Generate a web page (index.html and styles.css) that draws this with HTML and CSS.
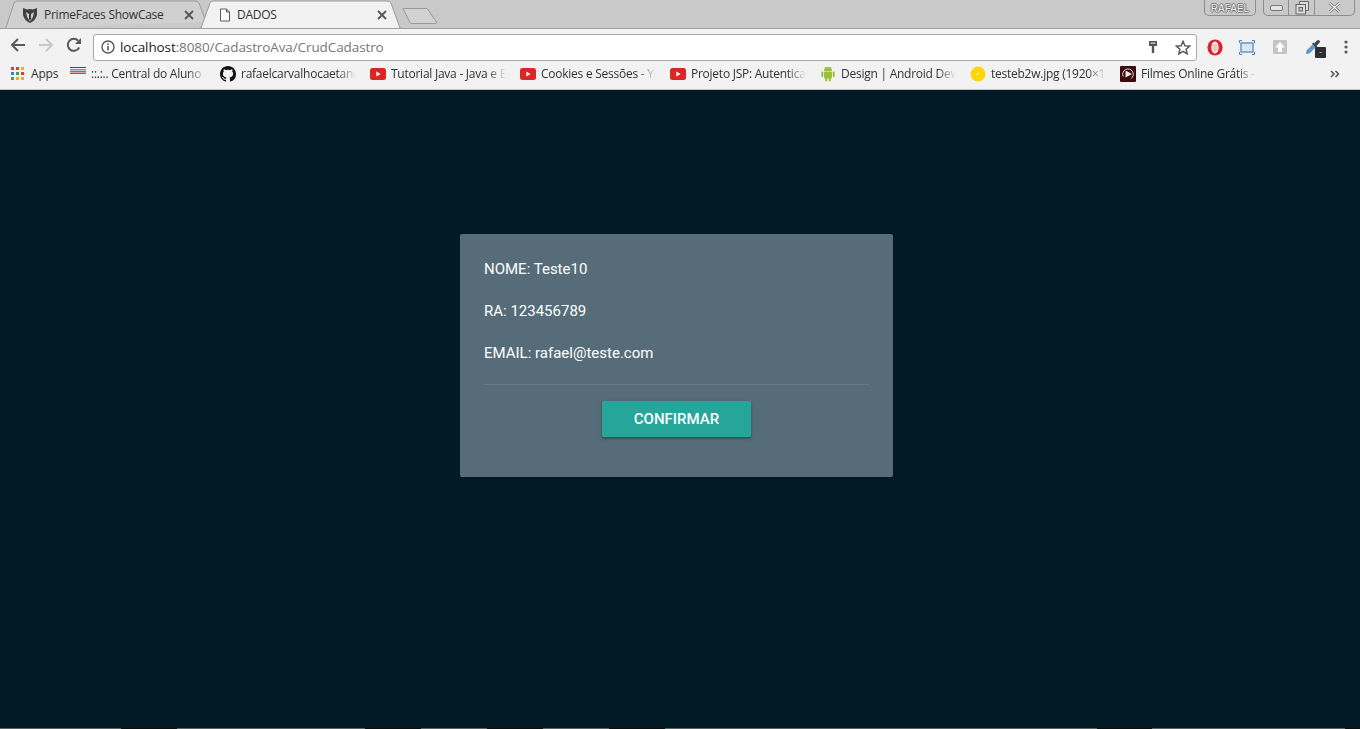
FILE: index.html
```html
<!DOCTYPE html>
<html lang="pt">
<head>
<meta charset="UTF-8">
<meta name="viewport" content="width=device-width, initial-scale=1">
<title>DADOS</title>
<link rel="stylesheet" href="styles.css">
</head>
<body>

<!-- Browser frame -->
<div class="tabstrip">
  <div class="tab tab-back">
    <svg class="tab-shape" width="201" height="29" viewBox="0 0 201 29"><path d="M0.5 29 L9 3 Q10 1 12 1 L190 1 Q193 1 194 3 L201 22" fill="#d0d0d0" stroke="#9b9b9b"/></svg>
    <svg class="tab-icon" width="16" height="18" viewBox="0 0 16 18">
      <path d="M1 2 L5 3.5 Q8 2.5 11 3.5 L15 2 L15 9 Q14 14 8 17 Q2 14 1 9 Z" fill="#3c4043"/>
      <path d="M4 6 L7 8 L7 12 L8 13.5 L9 12 L9 8 L12 6 L11 11 L8 15.5 L5 11 Z" fill="#c9cccc"/>
      <path d="M6.8 12 H9.2 L8 14.5 Z" fill="#222"/>
    </svg>
    <span class="tab-title">PrimeFaces ShowCase</span>
    <svg class="tab-close" width="10" height="10" viewBox="0 0 10 10"><path d="M1 1 L9 9 M9 1 L1 9" stroke="#555" stroke-width="1.8"/></svg>
  </div>
  <div class="tab tab-active">
    <svg class="tab-shape" width="204" height="29" viewBox="0 0 204 29"><path d="M0 29 L3 28 L12 3 Q13 1 15 1 L189 1 Q192 1 193 3 L202 28 L204 29 Z" fill="#f2f2f2"/><path d="M1 28 L3 28 L12 3 Q13 1 15 1 L189 1 Q192 1 193 3 L202 28 L204 28" fill="none" stroke="#9b9b9b"/></svg>
    <svg class="tab-icon" width="12" height="14" viewBox="0 0 12 14"><path d="M1.5 1 H7.5 L10.5 4 V13 H1.5 Z M7.5 1 V4 H10.5" fill="#fff" stroke="#5a5a5a"/></svg>
    <span class="tab-title">DADOS</span>
    <svg class="tab-close" width="10" height="10" viewBox="0 0 10 10"><path d="M1 1 L9 9 M9 1 L1 9" stroke="#555" stroke-width="1.8"/></svg>
  </div>
  <svg class="newtab" width="36" height="18" viewBox="0 0 36 18"><path d="M1 1.5 H25 L34.5 15 Q35 16.5 33 16.5 H10 Q8.5 16.5 8 15.5 Z" fill="#d2d2d2" stroke="#9a9a9a"/></svg>
  <div class="user-badge">RAFAEL</div>
  <div class="win-controls">
    <div class="win-btn win-min"><svg width="13" height="6" viewBox="0 0 13 6"><rect x="0.5" y="0.5" width="12" height="5" rx="1.5" fill="#e4e4e4" stroke="#777"/></svg></div>
    <div class="win-btn win-max"><svg width="14" height="14" viewBox="0 0 14 14"><path d="M4.5 3 V0.5 H13.5 V9.5 H11" fill="#ddd" stroke="#666"/><rect x="1" y="3.5" width="9.5" height="9.5" fill="#ddd" stroke="#666"/><rect x="4" y="6.5" width="3.5" height="3.5" fill="#c9c9c9" stroke="#666"/></svg></div>
    <div class="win-btn win-close"><svg width="13" height="11" viewBox="0 0 13 11"><path d="M1.5 1 L11.5 10 M11.5 1 L1.5 10" stroke="#777" stroke-width="2.6"/><path d="M1.5 1 L11.5 10 M11.5 1 L1.5 10" stroke="#eee" stroke-width="1.2"/></svg></div>
  </div>
</div>

<div class="toolbar">
  <svg class="nav-icon" width="16" height="16" viewBox="0 0 16 16"><path d="M15 8 H2.5 M8 2 L2 8 L8 14" fill="none" stroke="#5a5a5a" stroke-width="2"/></svg>
  <svg class="nav-icon" width="16" height="16" viewBox="0 0 16 16"><path d="M1 8 H13.5 M8 2 L14 8 L8 14" fill="none" stroke="#c8c8c8" stroke-width="2"/></svg>
  <svg class="nav-icon" width="16" height="16" viewBox="0 0 16 16"><path d="M13.2 10.5 A6 6 0 1 1 12.3 3.8" fill="none" stroke="#5a5a5a" stroke-width="2"/><path d="M15 1 V7 H9 Z" fill="#5a5a5a"/></svg>
  <div class="omnibox">
    <svg width="14" height="14" viewBox="0 0 14 14"><circle cx="7" cy="7" r="6" fill="none" stroke="#555" stroke-width="1.4"/><rect x="6.2" y="6" width="1.6" height="4.4" fill="#555"/><rect x="6.2" y="3.4" width="1.6" height="1.6" fill="#555"/></svg>
    <span class="url"><span class="url-host">localhost</span>:8080/CadastroAva/CrudCadastro</span>
    <svg class="omni-key" width="10" height="14" viewBox="0 0 10 14"><path d="M1 1 H9 V6 H6.2 V13 H3.8 V6 H1 Z" fill="#555"/><rect x="2.5" y="2.5" width="5" height="1.2" fill="#ddd"/></svg>
    <svg class="omni-star" width="16" height="15" viewBox="0 0 16 15"><path d="M8 1.3 L9.9 5.7 L14.7 6.1 L11.1 9.2 L12.2 13.9 L8 11.4 L3.8 13.9 L4.9 9.2 L1.3 6.1 L6.1 5.7 Z" fill="none" stroke="#5a5a5a" stroke-width="1.5"/></svg>
  </div>
  <div class="extensions">
    <svg width="16" height="17" viewBox="0 0 16 17"><ellipse cx="8" cy="8.5" rx="7.6" ry="8" fill="#e0202a"/><ellipse cx="8" cy="8.5" rx="3.6" ry="6" fill="#fff"/><path d="M5.5 8 V5 H10.5 V11 L8.5 13 H6.5 Z" fill="#f2c4c4"/></svg>
    <svg width="16" height="15" viewBox="0 0 16 15"><rect x="2" y="3" width="12" height="9" fill="#dbe6f0" stroke="#5b93c4" stroke-width="1.4"/><path d="M0.5 3 V0.5 H3 M13 0.5 H15.5 V3 M15.5 12 V14.5 H13 M3 14.5 H0.5 V12" fill="none" stroke="#3f86c4"/></svg>
    <svg width="14" height="14" viewBox="0 0 14 14"><rect width="14" height="14" rx="1" fill="#c4c4c4"/><path d="M7 2 L12 7.5 H9 V12 H5 V7.5 H2 Z" fill="#fff"/></svg>
    <span class="dropper">
      <svg width="16" height="16" viewBox="0 0 16 16"><path d="M1.5 14.5 L2 11.5 L8 5.5 L10.5 8 L4.5 14 Z" fill="#5d9bd0" stroke="#3f7fb5" stroke-width="0.7"/><path d="M7 4.5 L11.5 9 L12.6 7.9 L11.5 6.8 L14.5 3.8 Q15.5 2.5 14.4 1.5 Q13.3 0.6 12 1.6 L9.2 4.5 L8.1 3.4 Z" fill="#3e4347"/></svg>
      <span class="dropper-badge">-</span>
    </span>
    <svg class="menu-dots" width="4" height="14" viewBox="0 0 4 14"><circle cx="2" cy="2" r="1.6" fill="#5a5a5a"/><circle cx="2" cy="7" r="1.6" fill="#5a5a5a"/><circle cx="2" cy="12" r="1.6" fill="#5a5a5a"/></svg>
  </div>
</div>

<div class="bookmarks">
  <div class="apps">
    <svg width="13" height="13" viewBox="0 0 13 13">
      <rect width="3" height="3" fill="#e53935"/><rect x="5" width="3" height="3" fill="#e53935"/><rect x="10" width="3" height="3" fill="#f9a825"/>
      <rect y="5" width="3" height="3" fill="#1e88e5"/><rect x="5" y="5" width="3" height="3" fill="#43a047"/><rect x="10" y="5" width="3" height="3" fill="#e53935"/>
      <rect y="10" width="3" height="3" fill="#43a047"/><rect x="5" y="10" width="3" height="3" fill="#f9a825"/><rect x="10" y="10" width="3" height="3" fill="#f9a825"/>
    </svg>
    <span>Apps</span>
  </div>
  <div class="bookmark">
    <svg class="icon-flag" width="16" height="16" viewBox="0 0 16 16"><rect width="16" height="1" y="1" fill="#3b4a9c"/><rect width="16" height="1.5" y="3" fill="#7f8fd6"/><rect width="16" height="1.5" y="5" fill="#d8555f"/><rect width="16" height="1" y="7" fill="#5868b8"/></svg>
    <span class="bookmark-text">::.:.. Central do Aluno -</span>
  </div>
  <div class="bookmark">
    <svg width="16" height="16" viewBox="0 0 16 16"><path fill="#111" d="M8 0C3.58 0 0 3.58 0 8c0 3.54 2.29 6.53 5.47 7.59.4.07.55-.17.55-.38 0-.19-.01-.82-.01-1.49-2.01.37-2.53-.49-2.69-.94-.09-.23-.48-.94-.82-1.13-.28-.15-.68-.52-.01-.53.63-.01 1.08.58 1.23.82.72 1.21 1.87.87 2.33.66.07-.52.28-.87.51-1.07-1.78-.2-3.64-.89-3.64-3.95 0-.87.31-1.59.82-2.15-.08-.2-.36-1.02.08-2.12 0 0 .67-.21 2.2.82.64-.18 1.32-.27 2-.27s1.36.09 2 .27c1.53-1.04 2.2-.82 2.2-.82.44 1.1.16 1.92.08 2.12.51.56.82 1.27.82 2.15 0 3.07-1.87 3.75-3.65 3.95.29.25.54.73.54 1.48 0 1.07-.01 1.93-.01 2.2 0 .21.15.46.55.38A8.01 8.01 0 0 0 16 8c0-4.42-3.58-8-8-8z"/></svg>
    <span class="bookmark-text">rafaelcarvalhocaetano</span>
  </div>
  <div class="bookmark">
    <svg width="16" height="12" viewBox="0 0 16 12"><rect width="16" height="12" rx="2.5" fill="#dc2626"/><path d="M6.3 3.4 L10.6 6 L6.3 8.6 Z" fill="#fff"/></svg>
    <span class="bookmark-text">Tutorial Java - Java e Eclipse</span>
  </div>
  <div class="bookmark">
    <svg width="16" height="12" viewBox="0 0 16 12"><rect width="16" height="12" rx="2.5" fill="#dc2626"/><path d="M6.3 3.4 L10.6 6 L6.3 8.6 Z" fill="#fff"/></svg>
    <span class="bookmark-text">Cookies e Sessões - YouTube</span>
  </div>
  <div class="bookmark">
    <svg width="16" height="12" viewBox="0 0 16 12"><rect width="16" height="12" rx="2.5" fill="#dc2626"/><path d="M6.3 3.4 L10.6 6 L6.3 8.6 Z" fill="#fff"/></svg>
    <span class="bookmark-text">Projeto JSP: Autenticação</span>
  </div>
  <div class="bookmark">
    <svg width="16" height="16" viewBox="0 0 16 16"><path d="M4 5 A4 4 0 0 1 12 5 Z" fill="#9bbf3b"/><path d="M5 1 L6 2.5 M11 1 L10 2.5" stroke="#9bbf3b"/><rect x="4" y="5.6" width="8" height="7" rx="1" fill="#9bbf3b"/><rect x="1.3" y="5.6" width="2" height="5.4" rx="1" fill="#9bbf3b"/><rect x="12.7" y="5.6" width="2" height="5.4" rx="1" fill="#9bbf3b"/><rect x="5.2" y="11" width="2" height="4.6" rx="1" fill="#9bbf3b"/><rect x="8.8" y="11" width="2" height="4.6" rx="1" fill="#9bbf3b"/></svg>
    <span class="bookmark-text">Design | Android Developers</span>
  </div>
  <div class="bookmark">
    <svg width="16" height="16" viewBox="0 0 16 16"><circle cx="8" cy="8" r="7.5" fill="#ffd60a"/><circle cx="8" cy="8" r="1" fill="#fff6b0"/></svg>
    <span class="bookmark-text">testeb2w.jpg (1920×1080)</span>
  </div>
  <div class="bookmark">
    <svg width="16" height="16" viewBox="0 0 16 16"><rect width="16" height="16" rx="1" fill="#3a0a0c"/><path d="M3.2 10.5 A5.3 5.3 0 1 1 11 12.6" fill="none" stroke="#e8dada" stroke-width="1"/><path d="M5.5 4.5 L12 8 L5.5 11.5 Z" fill="#f4e6e6"/></svg>
    <span class="bookmark-text">Filmes Online Grátis - Assistir</span>
  </div>
  <svg class="more" width="10" height="8" viewBox="0 0 10 8"><path d="M1 1 L4 4 L1 7 M5.5 1 L8.5 4 L5.5 7" fill="none" stroke="#555" stroke-width="1.5"/></svg>
</div>

<!-- Page content -->
<div class="page">
  <div class="card">
    <p class="field">NOME: Teste10</p>
    <p class="field">RA: 123456789</p>
    <p class="field">EMAIL: rafael@teste.com</p>
    <div class="divider"></div>
    <div class="card-actions">
      <button class="btn-confirm">CONFIRMAR</button>
    </div>
  </div>
</div>
<div class="task-edge"></div>

</body>
</html>
```

FILE: styles.css
```css
html, body {
  margin: 0;
  height: 729px;
  overflow: hidden;
}
body {
  background-color: #021926;
  font-family: "Open Sans", "Noto Sans", sans-serif;
  display: flex;
  flex-direction: column;
}

/* Tab strip */
.tabstrip {
  height: 28px;
  flex: none;
  background-color: #c9c9c9;
  display: flex;
  padding-left: 5px;
  padding-right: 5px;
  box-sizing: border-box;
  position: relative;
}
.tab {
  height: 29px;
  position: relative;
  display: flex;
  align-items: center;
  box-sizing: border-box;
  font-size: 12px;
  color: #333;
}
.tab-shape {
  position: absolute;
  left: 0;
  top: 0;
}
.tab-icon, .tab-title, .tab-close {
  position: relative;
}
.tab-back {
  width: 201px;
  padding-left: 17px;
}
.tab-active {
  width: 204px;
  margin-left: -8px;
  padding-left: 21px;
}
.tab-title {
  margin-left: 6px;
  letter-spacing: -0.25px;
  white-space: nowrap;
}
.tab-active .tab-title {
  margin-left: 6px;
}
.tab-close {
  margin-left: auto;
}
.tab-back .tab-close {
  margin-right: 12px;
}
.tab-active .tab-close {
  margin-right: 15px;
}
.newtab {
  margin-top: 7px;
  margin-left: 0;
}

/* Window buttons */
.user-badge {
  margin-left: auto;
  width: 52px;
  height: 16px;
  box-sizing: border-box;
  border: 1px solid #8d8d8d;
  border-top: none;
  border-radius: 0 0 5px 5px;
  font-family: "Liberation Sans", sans-serif;
  font-size: 10px;
  line-height: 17px;
  text-align: center;
  color: #efefef;
  text-shadow: 1px 0 0 #777, -1px 0 0 #777, 0 1px 0 #777, 0 -1px 0 #777;
}
.win-controls {
  width: 92px;
  height: 16px;
  margin-left: 7px;
  box-sizing: border-box;
  border: 1px solid #8d8d8d;
  border-top: none;
  border-radius: 0 0 5px 5px;
  display: flex;
}
.win-btn {
  display: flex;
  align-items: center;
  justify-content: center;
  height: 15px;
  border-right: 1px solid #8d8d8d;
}
.win-min { width: 24px; }
.win-max { width: 25px; }
.win-close { flex: 1; border-right: none; }

/* Toolbar */
.toolbar {
  height: 33px;
  flex: none;
  box-sizing: border-box;
  background-color: #f2f2f2;
  border-top: 1px solid #a0a0a0;
  display: flex;
  align-items: center;
  padding-left: 10px;
  position: relative;
}
.nav-icon {
  margin-right: 12px;
}
.nav-icon:nth-child(3) {
  margin-right: 11px;
}
.omnibox {
  width: 1104px;
  height: 27px;
  margin-top: 5px;
  margin-bottom: 1px;
  box-sizing: border-box;
  background-color: #fff;
  border: 1px solid #a9a9a9;
  border-radius: 3px;
  display: flex;
  align-items: center;
  padding-left: 7px;
}
.url {
  margin-left: 5px;
  font-size: 13.5px;
  color: #777;
  letter-spacing: -0.1px;
  white-space: nowrap;
}
.url-host {
  color: #222;
}
.omni-key {
  margin-left: auto;
}
.omni-star {
  margin-left: 17px;
  margin-right: 5px;
}
.extensions {
  display: flex;
  align-items: center;
  margin-left: 10px;
  margin-top: 4px;
}
.extensions > svg:nth-child(2) {
  margin-left: 16px;
}
.extensions > svg:nth-child(3) {
  margin-left: 18px;
}
.dropper {
  margin-left: 18px;
  width: 20px;
  height: 22px;
  position: relative;
  padding-top: 2px;
  box-sizing: border-box;
}
.dropper-badge {
  position: absolute;
  left: 10px;
  top: 11px;
  width: 11px;
  height: 11px;
  background-color: #2b2f33;
  border-radius: 1px;
  color: #e8d24a;
  font-size: 9px;
  line-height: 10px;
  text-align: center;
}
.menu-dots {
  margin-left: 19px;
}

/* Bookmarks bar */
.bookmarks {
  height: 29px;
  flex: none;
  box-sizing: border-box;
  background-color: #f2f2f2;
  border-bottom: 1px solid #c4c4c4;
  display: flex;
  align-items: center;
  padding-left: 11px;
  padding-bottom: 3px;
  font-size: 12px;
  color: #333;
}
.apps {
  display: flex;
  align-items: center;
  width: 59px;
  letter-spacing: -0.2px;
}
.apps span {
  margin-left: 7px;
}
.bookmark {
  width: 136px;
  margin-right: 14px;
  display: flex;
  align-items: center;
  letter-spacing: -0.25px;
}
.bookmark svg {
  flex: none;
}
.bookmark-text {
  margin-left: 5px;
  width: 115px;
  overflow: hidden;
  white-space: nowrap;
  -webkit-mask-image: linear-gradient(to right, #000 84%, transparent 100%);
  mask-image: linear-gradient(to right, #000 84%, transparent 100%);
}
.more {
  margin-left: 60px;
}

/* Page */
.page {
  flex: 1;
  display: flex;
  justify-content: center;
  align-items: flex-start;
  padding-top: 144px;
  padding-right: 7px;
}
.card {
  width: 433px;
  height: 243px;
  box-sizing: border-box;
  padding: 24px;
  background-color: #566d79;
  border-radius: 2px;
  font-family: Roboto, sans-serif;
  font-size: 15px;
  color: #fff;
}
.field {
  margin: 0 0 20px 0;
  line-height: 22px;
  height: 22px;
}
.divider {
  height: 1px;
  background-color: #647a85;
}
.card-actions {
  margin-top: 16px;
  display: flex;
  justify-content: center;
}
.btn-confirm {
  width: 149px;
  height: 36px;
  padding: 0;
  border: none;
  border-radius: 2px;
  background-color: #26a69a;
  color: #fff;
  font-family: Roboto, sans-serif;
  font-size: 15px;
  font-weight: 500;
  box-shadow: 0 2px 2px rgba(0, 0, 0, 0.2), 0 1px 4px rgba(0, 0, 0, 0.15);
}

/* Sliver of the taskbar at the bottom of the capture */
.task-edge {
  height: 1px;
  flex: none;
  background: linear-gradient(to right,
    #5a5f62 0 121px, #0c0c0c 121px 177px,
    #5a5f62 177px 365px, #0c0c0c 365px 421px,
    #5a5f62 421px 487px, #0c0c0c 487px 543px,
    #5a5f62 543px 609px, #0c0c0c 609px 665px,
    #5a5f62 665px 1097px, #0c0c0c 1097px 1152px,
    #5a5f62 1152px 1345px, #0c0c0c 1345px 1360px);
}
```
